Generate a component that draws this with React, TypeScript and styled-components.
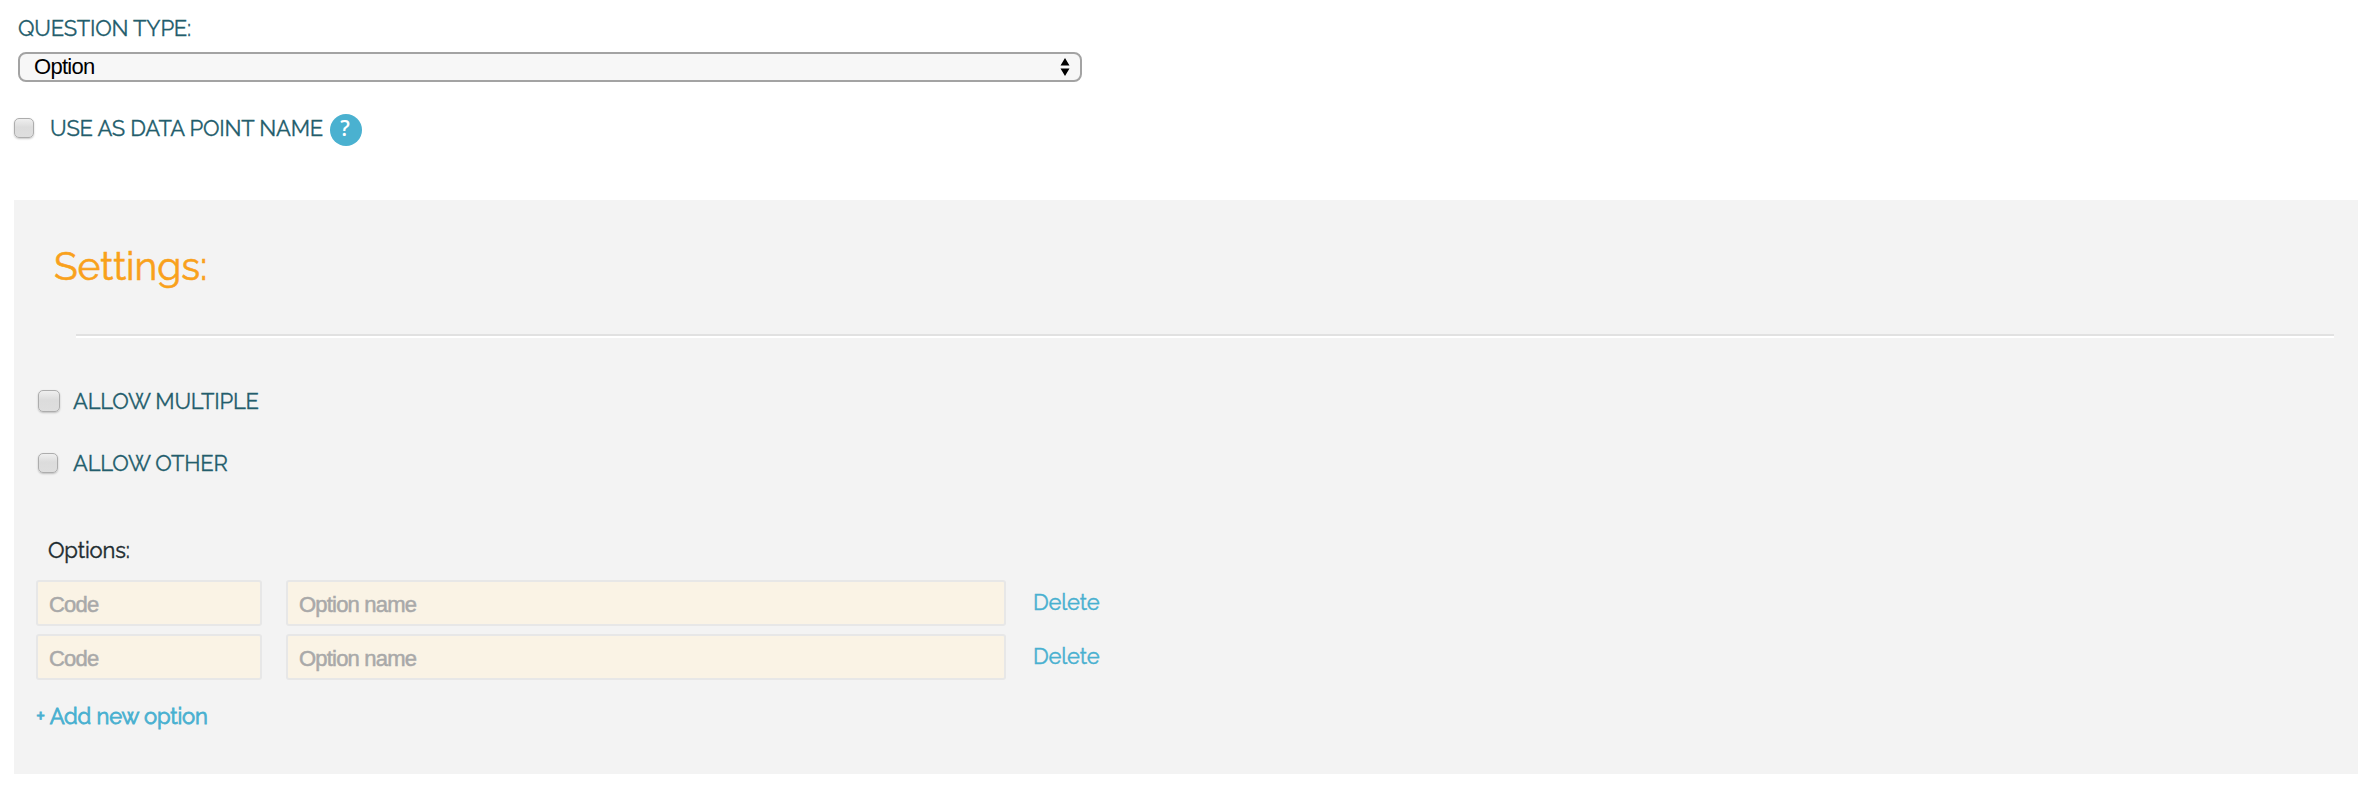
import React from "react";
import styled, { createGlobalStyle } from "styled-components";

const GlobalStyle = createGlobalStyle`
  body { margin: 0; background: #fff; }
  *, *::before, *::after { box-sizing: border-box; }
`;

const display = `"Raleway", "Lato", sans-serif`;
const system = `"Liberation Sans", Arial, sans-serif`;

const Page = styled.main`
  height: 788px;
  padding: 13px 18px 14px 14px;
  font-family: ${display};
  font-size: 22px;
  color: #1c2b2f;
  display: flex;
  flex-direction: column;
`;

const Caption = styled.span`
  line-height: 30px;
  font-size: 22px;
  letter-spacing: -0.22px;
  color: #235d6c;
  -webkit-text-stroke: 0.3px #235d6c;
  white-space: nowrap;
`;

const TypeField = styled.label`
  display: flex;
  flex-direction: column;
  width: 1068px;
  padding-left: 4px;
  gap: 9px;
`;

const SelectBox = styled.span`
  display: flex;
  align-items: center;
  height: 30px;
  padding-right: 10px;
  border: 2px solid #a3a3a3;
  border-radius: 8px;
  background: #f7f7f7;
`;

const Select = styled.select`
  flex: 1;
  appearance: none;
  border: 0;
  outline: 0;
  margin: 0;
  padding: 0 0 0 14px;
  height: 26px;
  line-height: 26px;
  background: transparent;
  font-family: ${system};
  font-size: 22px;
  letter-spacing: -0.7px;
  color: #000;
`;

const CheckRow = styled.label<{ $gap: number }>`
  display: flex;
  align-items: center;
  height: 32px;
  gap: ${(p) => p.$gap}px;
`;

const DataPointRow = styled(CheckRow)`
  margin-top: 32px;
  align-items: flex-start;

  input { margin-top: 4px; }
  ${Caption} { line-height: 28px; }
`;

const Checkbox = styled.input.attrs({ type: "checkbox" })<{ $size?: number }>`
  appearance: none;
  flex: none;
  margin: 0;
  width: ${(p) => p.$size ?? 20}px;
  height: ${(p) => p.$size ?? 20}px;
  border: 1.5px solid #adadad;
  border-radius: 5px;
  background: linear-gradient(#efefef, #dcdcdc 45%, #dedede);
  box-shadow: 0 1px 2px rgba(0, 0, 0, 0.22);
`;

const Help = styled.span`
  display: flex;
  align-items: center;
  justify-content: center;
  width: 32px;
  height: 32px;
  margin-left: -9px;
  padding: 0 2px 3px 0;
  border-radius: 50%;
  background: #4ab1d0;
  color: #fff;
  font: 600 21px/1 "Open Sans", sans-serif;
`;

const Panel = styled.section`
  display: flex;
  flex-direction: column;
  height: 574px;
  margin-top: 54px;
  padding: 43px 24px 0 22px;
  background: #f3f3f3;
`;

const Heading = styled.h2`
  margin: 0 0 0 18px;
  font-weight: 400;
  font-size: 39px;
  line-height: 46px;
  letter-spacing: -0.1px;
  color: #f9a11b;
  -webkit-text-stroke: 0.6px #f9a11b;
`;

const Rule = styled.hr`
  width: 2258px;
  height: 4px;
  margin: 45px 0 0 40px;
  border: 0;
  border-top: 2px solid #e1e1e1;
  background: #fff;
`;

const Checks = styled.div`
  display: flex;
  flex-direction: column;
  gap: 30px;
  margin: 47px 0 0 2px;
`;

const OptionsTitle = styled.h3`
  margin: 56px 0 15px 12px;
  font-weight: 400;
  font-size: 22px;
  line-height: 30px;
  letter-spacing: -0.1px;
  -webkit-text-stroke: 0.4px #1c2b2f;
`;

const OptionList = styled.div`
  display: grid;
  grid-template-columns: 226px 720px auto;
  column-gap: 24px;
  row-gap: 8px;
`;

const TextInput = styled.input`
  height: 46px;
  width: 100%;
  border: 2px solid #e7e7e7;
  border-radius: 3px;
  background: #faf3e5;
  padding: 4px 11px 0;
  outline: 0;
  font-family: ${system};
  font-size: 22px;
  letter-spacing: -0.8px;
  &::placeholder {
    color: #a9a9a9;
    opacity: 1;
    -webkit-text-stroke: 0.5px #a9a9a9;
  }
`;

const Action = styled.a<{ $strong?: boolean }>`
  color: #48b0d0;
  font-size: 22px;
  line-height: 30px;
  letter-spacing: -0.18px;
  -webkit-text-stroke: ${(p) => (p.$strong ? "0.8px" : "0.4px")} #48b0d0;
  cursor: pointer;
`;

const DeleteCell = styled.div`
  padding: 7px 0 0 3px;
`;

const AddCell = styled.div`
  margin-top: 21px;
`;

export default function App() {
  return (
    <>
      <GlobalStyle />
      <Page>
        <TypeField>
          <Caption>QUESTION TYPE:</Caption>
          <SelectBox>
            <Select>
              <option>Option</option>
            </Select>
            <svg width="10" height="18" viewBox="0 0 10 18">
              <path d="M5 0L9.500 7.500H.5zM5 18L.5 10.500H9.500z" fill="#000" />
            </svg>
          </SelectBox>
        </TypeField>
        <DataPointRow $gap={16}>
          <Checkbox />
          <Caption>USE AS DATA POINT NAME</Caption>
          <Help>?</Help>
        </DataPointRow>
        <Panel>
          <Heading>Settings:</Heading>
          <Rule />
          <Checks>
            <CheckRow $gap={13}>
              <Checkbox $size={22} />
              <Caption>ALLOW MULTIPLE</Caption>
            </CheckRow>
            <CheckRow $gap={15}>
              <Checkbox />
              <Caption>ALLOW OTHER</Caption>
            </CheckRow>
          </Checks>
          <OptionsTitle>Options:</OptionsTitle>
          <OptionList>
            {[0, 1].map((row) => (
              <React.Fragment key={row}>
                <TextInput placeholder="Code" />
                <TextInput placeholder="Option name" />
                <DeleteCell>
                  <Action>Delete</Action>
                </DeleteCell>
              </React.Fragment>
            ))}
          </OptionList>
          <AddCell>
            <Action $strong>+ Add new option</Action>
          </AddCell>
        </Panel>
      </Page>
    </>
  );
}
